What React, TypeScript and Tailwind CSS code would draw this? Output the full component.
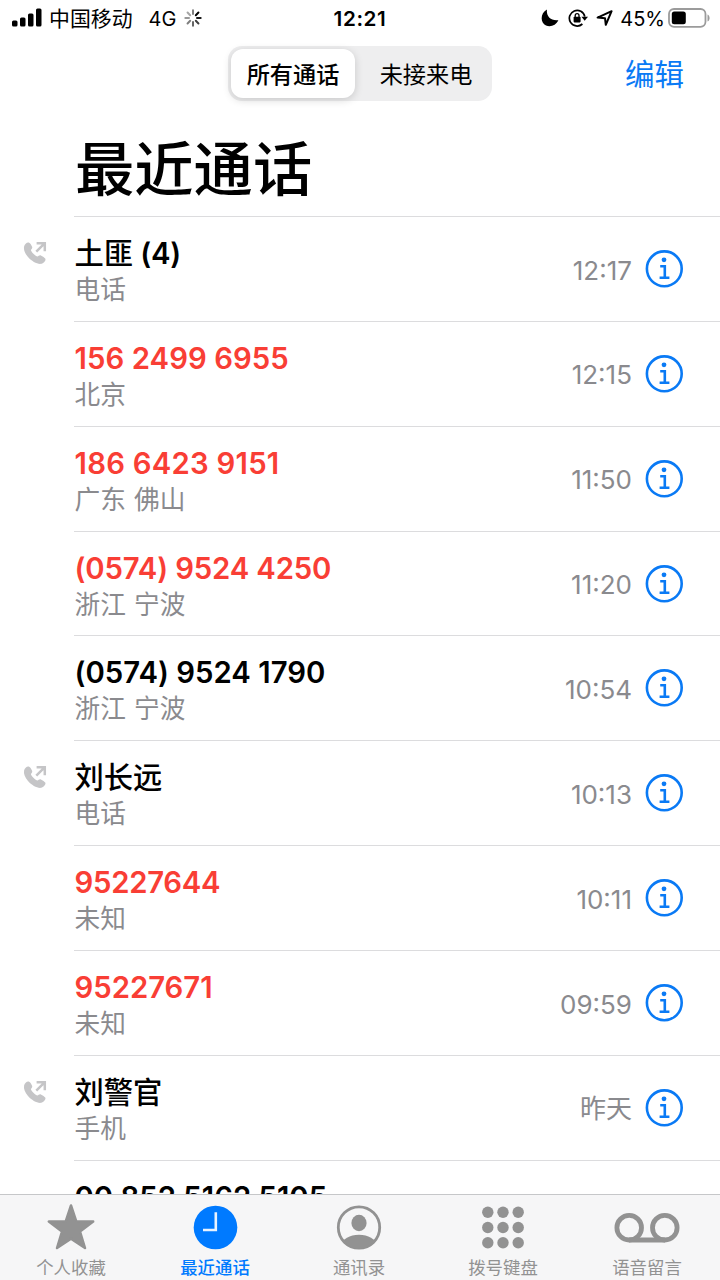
type Call = {
  name: string;
  count?: number;
  place?: string;
  time?: string;
  missed?: boolean;
  outgoing?: boolean;
  nameClass: string;
};

const calls: Call[] = [
  { name: "土匪", count: 4, place: "电话", time: "12:17", outgoing: true, nameClass: "font-medium" },
  { name: "156 2499 6955", place: "北京", time: "12:15", missed: true, nameClass: "tracking-[0.07px]" },
  { name: "186 6423 9151", place: "广东 佛山", time: "11:50", missed: true, nameClass: "tracking-[0.25px]" },
  { name: "(0574) 9524 4250", place: "浙江 宁波", time: "11:20", missed: true, nameClass: "tracking-[-0.14px]" },
  { name: "(0574) 9524 1790", place: "浙江 宁波", time: "10:54", nameClass: "tracking-[0.02px]" },
  { name: "刘长远", place: "电话", time: "10:13", outgoing: true, nameClass: "font-medium" },
  { name: "95227644", place: "未知", time: "10:11", missed: true, nameClass: "tracking-[-0.25px]" },
  { name: "95227671", place: "未知", time: "09:59", missed: true, nameClass: "tracking-normal" },
  { name: "刘警官", place: "手机", time: "昨天", outgoing: true, nameClass: "font-medium" },
  { name: "00 852 5162 5105", nameClass: "tracking-normal" },
];

const spokes = [1, 0.9, 0.75, 0.6, 0.5, 0.4, 0.35, 0.5];

function StatusBar() {
  return (
    <div className="relative flex h-9 shrink-0 items-center pl-3 pr-2 text-[19px]">
      <svg width="30" height="20" viewBox="0 0 30 20">
        <rect x="0" y="12.5" width="5.5" height="6" rx="1.5" />
        <rect x="8" y="9.5" width="5.5" height="9" rx="1.5" />
        <rect x="16" y="5.5" width="5.5" height="13" rx="1.5" />
        <rect x="24" y="0.5" width="5.5" height="18" rx="1.5" />
      </svg>
      <span className="ml-[7px] pt-[1px] text-[20.9px]">中国移动</span>
      <span className="ml-[16px] pt-[2px] text-[20px]">4G</span>
      <svg className="ml-2" width="18" height="18" viewBox="0 0 18 18" stroke="#000" strokeWidth="2" strokeLinecap="round">
        {spokes.map((o, i) => (
          <path key={i} d="M9 1.3V5" opacity={o} transform={`rotate(${i * 45 + 45} 9 9)`} />
        ))}
      </svg>
      <span className="absolute left-1/2 -translate-x-1/2 pt-[2px] text-[20.7px] font-semibold tracking-[0.6px]">12:21</span>
      <div className="ml-auto flex items-center">
        <svg width="18" height="18" viewBox="0 0 18 18">
          <path d="M6 .6C5 7 9.5 12.2 17.4 11.2C15 16.2 9.5 18.5 5 16.4C-.9 13.6-1 4.3 6 .6Z" />
        </svg>
        <svg className="ml-[9px]" width="20" height="20" viewBox="0 0 20 20" fill="none" stroke="#000" strokeWidth="1.7">
          <path d="M16.8 8.6A7.8 7.8 0 1 0 14.4 16" />
          <path d="M13.4 8.8H20L16.7 12.8Z" fill="#000" stroke="none" />
          <rect x="5.6" y="8.8" width="7" height="5.6" rx="0.8" fill="#000" stroke="none" />
          <path d="M7.2 9.5V7.6a1.9 1.9 0 0 1 3.8 0V9.5" strokeWidth="1.3" />
        </svg>
        <svg className="ml-2" width="18" height="18" viewBox="0 0 18 18" fill="none" stroke="#000" strokeWidth="2" strokeLinejoin="round">
          <path d="M1.6 8.6L15.6 2.2L9.8 15.8L9 9.2Z" />
        </svg>
        <span className="ml-[6px] pt-[2px] text-[20px]">45%</span>
        <svg className="ml-[3px]" width="44" height="20" viewBox="0 0 44 20">
          <rect x="1" y="1" width="36.5" height="17.8" rx="5" fill="none" stroke="#9b9b9b" strokeWidth="1.8" />
          <rect x="3.8" y="3.6" width="14" height="12.6" rx="2.5" />
          <path d="M39.5 6.5C42.3 7.5 42.3 12.5 39.5 13.5Z" fill="#9b9b9b" />
        </svg>
      </div>
    </div>
  );
}

function OutgoingIcon() {
  return (
    <svg width="24" height="24" viewBox="0 0 24 24" fill="none">
      <path
        d="M1.1 5.4C1.6 2.8 4.4.8 6.2 1.7C7.6 2.6 8.7 4.6 9.2 6C9.6 7.4 8.2 8.2 7.9 9.2C8.3 11 12.8 15.4 14.4 15.5C15.5 15.1 16.4 13.8 17.9 14.4C19.6 15.1 21.7 16.5 22.4 17.8C23 19.8 20.4 22.4 18.2 22.8C14.3 23.5 8.7 20.2 5 16C1.9 12.4.4 8.4 1.1 5.4Z"
        fill="#c5c5c7"
      />
      <path d="M13.6 2.2H21.8V10.2M21.3 2.7L13.3 10.6" stroke="#c5c5c7" strokeWidth="2.5" />
    </svg>
  );
}

function InfoIcon() {
  return (
    <svg width="38" height="38" viewBox="0 0 38 38" fill="none" stroke="#0a7af5" className="shrink-0">
      <circle cx="19.3" cy="18.8" r="17.4" strokeWidth="2.6" />
      <circle cx="19" cy="9.8" r="2.4" fill="#0a7af5" stroke="none" />
      <path d="M15.2 16.3H19.8V27.8M14.6 27.8H24.4" strokeWidth="2.6" />
    </svg>
  );
}

function CallRow({ call }: { call: Call }) {
  return (
    <div className="flex h-[104.86px] shrink-0">
      <div className="w-[74px] shrink-0 pl-[23px] pt-[25px]">{call.outgoing && <OutgoingIcon />}</div>
      <div className="flex flex-1 items-start border-t border-[#dcdcde] pr-[37px]">
        <div className="flex-1 pl-[0.5px] pt-[17px]">
          <div
            className={`h-10 whitespace-nowrap text-[29.3px] leading-10 ${call.nameClass} ${
              call.missed ? "text-[#f93e35]" : "text-black"
            } ${call.outgoing ? "" : "font-semibold"}`}
          >
            {call.name}
            {call.count && <span className="font-semibold tracking-[-0.2px]"> ({call.count})</span>}
          </div>
          {call.place && <div className="h-8 text-[25.7px] leading-8 text-[#8a8a8e] [word-spacing:1px]">{call.place}</div>}
        </div>
        <div className="flex h-[104px] items-center gap-[13px]">
          {call.time && <span className="pt-[2px] text-[26px] text-[#8a8a8e]">{call.time}</span>}
          <InfoIcon />
        </div>
      </div>
    </div>
  );
}

const tabs = [
  {
    label: "个人收藏",
    icon: (
      <path
        d="M24 3.5L29.2 19.2L46.2 19.6L33 29.6L38 46L24 36.6L10 46L15 29.6L1.8 19.6L18.8 19.2Z"
        fill="currentColor"
        stroke="currentColor"
        strokeWidth="2.5"
        strokeLinejoin="round"
      />
    ),
  },
  {
    label: "最近通话",
    active: true,
    icon: (
      <>
        <circle cx="24.5" cy="25.5" r="21.8" fill="currentColor" />
        <path d="M24.8 10.3V28H12" stroke="#e9f3ff" strokeWidth="2.6" fill="none" />
      </>
    ),
  },
  {
    label: "通讯录",
    icon: (
      <>
        <clipPath id="face">
          <circle cx="24" cy="25.5" r="21" />
        </clipPath>
        <circle cx="24" cy="25.5" r="20.7" fill="none" stroke="currentColor" strokeWidth="2.8" />
        <g clipPath="url(#face)" fill="currentColor">
          <ellipse cx="24" cy="21" rx="7.6" ry="8.2" />
          <ellipse cx="24" cy="43" rx="17" ry="10.2" />
        </g>
      </>
    ),
  },
  {
    label: "拨号键盘",
    icon: [10.3, 25.5, 40.7].flatMap((y) =>
      [8.8, 24, 39.2].map((x) => <circle key={`${x}-${y}`} cx={x} cy={y} r="5.7" fill="currentColor" />)
    ),
  },
  {
    label: "语音留言",
    icon: (
      <g fill="none" stroke="currentColor" strokeWidth="4.8">
        <circle cx="6.2" cy="25.7" r="12.3" />
        <circle cx="41.8" cy="25.7" r="12.3" />
        <path d="M6 38H42" />
      </g>
    ),
  },
];

export default function App() {
  return (
    <div className="flex h-[1280px] w-[720px] flex-col overflow-hidden bg-white font-['Inter','Noto_Sans_CJK_SC',sans-serif] text-black">
      <StatusBar />

      <header className="relative flex h-[76px] shrink-0 justify-center pt-[10px]">
        <div className="flex h-[55px] w-[264px] rounded-[14px] bg-[#eeeeef] p-[3px] text-[23.2px]">
          <button className="flex w-[124px] items-center justify-center rounded-[12px] bg-white pt-[3px] font-medium shadow-[0_2px_8px_rgba(0,0,0,0.16)]">
            所有通话
          </button>
          <button className="flex flex-1 items-center justify-center pl-2 pt-[3px]">未接来电</button>
        </div>
        <button className="absolute right-9 top-[16px] text-[29.5px] leading-[44px] text-[#0a7af5]">编辑</button>
      </header>

      <h1 className="h-[104px] shrink-0 pl-[75px] text-[59.3px] font-medium leading-[115px]">最近通话</h1>

      <main className="flex min-h-0 flex-1 flex-col overflow-hidden">
        {calls.map((call) => (
          <CallRow key={call.name} call={call} />
        ))}
      </main>

      <nav className="flex h-[86px] shrink-0 border-t border-[#c6c7c9] bg-[#f6f6f7]">
        {tabs.map((tab) => (
          <button
            key={tab.label}
            className={`flex w-36 flex-col items-center pr-0.5 pt-[7px] text-[17.4px] leading-[27px] ${
              tab.active ? "font-medium text-[#007aff]" : "text-[#929292]"
            }`}
          >
            <svg width="48" height="52" viewBox="0 0 48 52" className="shrink-0 overflow-visible">
              {tab.icon}
            </svg>
            {tab.label}
          </button>
        ))}
      </nav>
    </div>
  );
}
